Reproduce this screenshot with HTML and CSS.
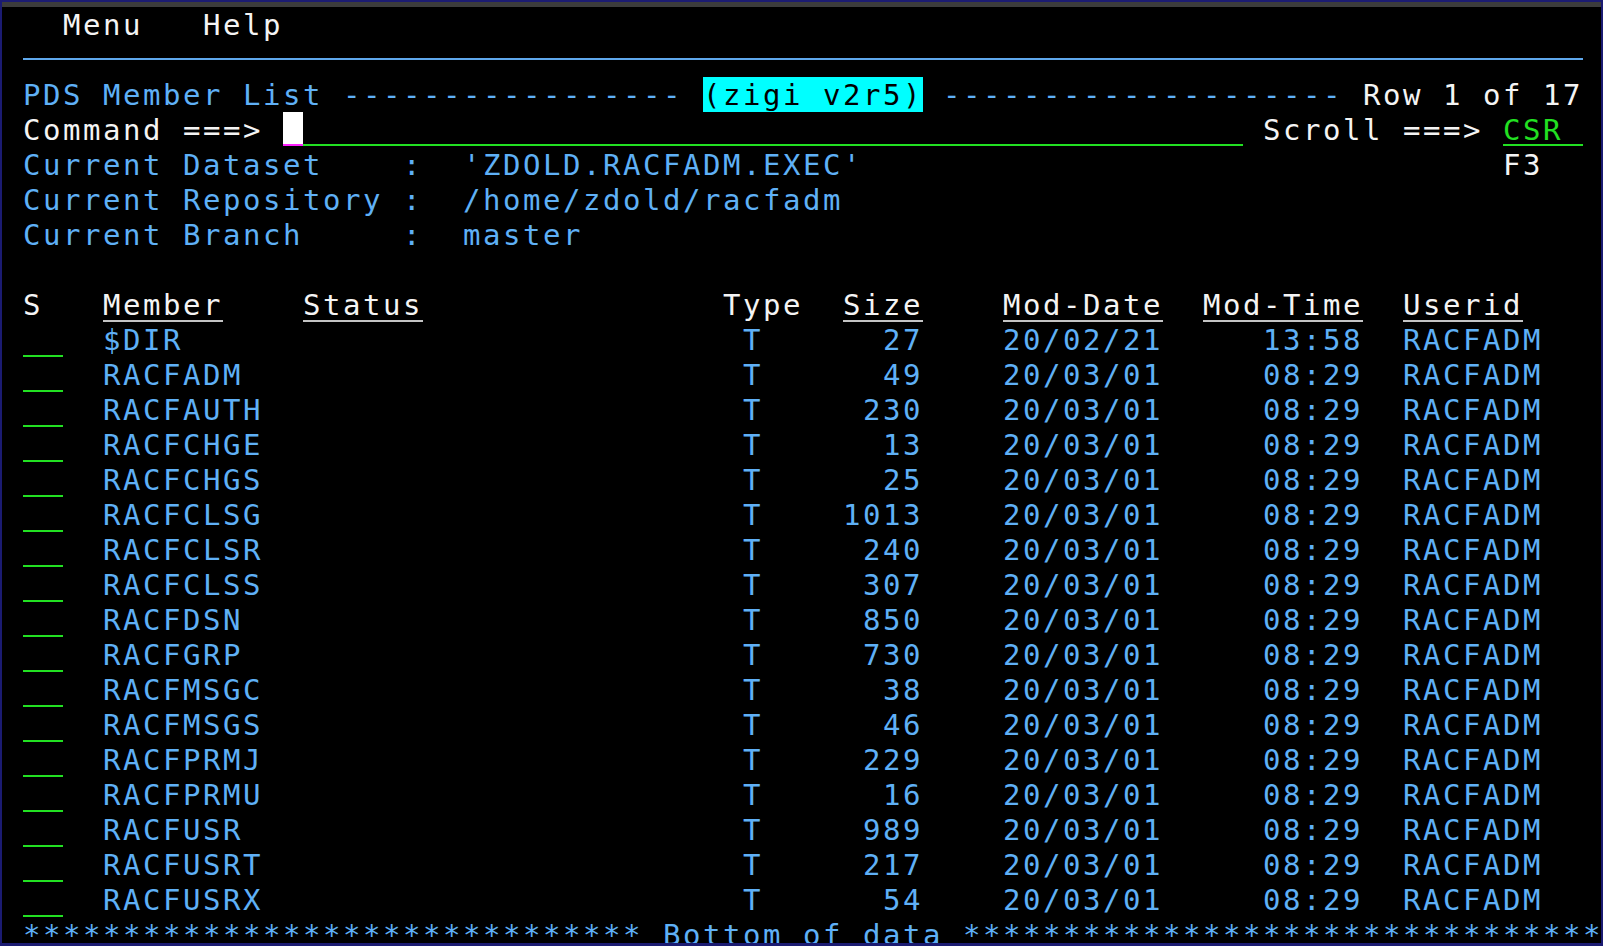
FILE: index.html
```html
<!DOCTYPE html>
<html>
<head>
<meta charset="utf-8">
<title>PDS Member List</title>
<link rel="stylesheet" href="styles.css">
</head>
<body>
<div class="screen">
  <div class="row w">   Menu   Help</div>
  <div class="row"><div class="sep"></div></div>
  <div class="row b"> PDS Member List ----------------- <span class="hl">(zigi v2r5)</span> -------------------- <span class="w">Row 1 of 17</span></div>
  <div class="row w"> Command ===> <span class="cursor"></span><span class="field"></span> Scroll ===> <span class="u cmd g">CSR </span></div>
  <div class="row b"><span class="lbl"> Current Dataset    :  </span><span class="val">'ZDOLD.RACFADM.EXEC'</span><span class="pf w">F3</span></div>
  <div class="row b"><span class="lbl"> Current Repository :  </span><span class="val">/home/zdold/racfadm</span></div>
  <div class="row b"><span class="lbl"> Current Branch     :  </span><span class="val">master</span></div>
  <div class="row"></div>
  <div class="row w hdr">
    <span class="c-s">S</span>
    <span class="c-mem"><span class="u hu">Member</span></span>
    <span class="c-sta"><span class="u hu">Status</span></span>
    <span class="c-typ">Type</span>
    <span class="c-siz"><span class="u hu">Size</span></span>
    <span class="c-10"><span class="u hu">Mod-Date</span></span>
    <span class="c-10"><span class="u hu">Mod-Time</span></span>
    <span class="c-10"><span class="u hu">Userid</span></span>
  </div>
  <div class="row b trow"><span class="sel"></span><span class="mem">$DIR</span><span class="typ">T</span><span class="siz">27</span><span class="dat">20/02/21</span><span class="tim">13:58</span><span class="uid">RACFADM</span></div>
  <div class="row b trow"><span class="sel"></span><span class="mem">RACFADM</span><span class="typ">T</span><span class="siz">49</span><span class="dat">20/03/01</span><span class="tim">08:29</span><span class="uid">RACFADM</span></div>
  <div class="row b trow"><span class="sel"></span><span class="mem">RACFAUTH</span><span class="typ">T</span><span class="siz">230</span><span class="dat">20/03/01</span><span class="tim">08:29</span><span class="uid">RACFADM</span></div>
  <div class="row b trow"><span class="sel"></span><span class="mem">RACFCHGE</span><span class="typ">T</span><span class="siz">13</span><span class="dat">20/03/01</span><span class="tim">08:29</span><span class="uid">RACFADM</span></div>
  <div class="row b trow"><span class="sel"></span><span class="mem">RACFCHGS</span><span class="typ">T</span><span class="siz">25</span><span class="dat">20/03/01</span><span class="tim">08:29</span><span class="uid">RACFADM</span></div>
  <div class="row b trow"><span class="sel"></span><span class="mem">RACFCLSG</span><span class="typ">T</span><span class="siz">1013</span><span class="dat">20/03/01</span><span class="tim">08:29</span><span class="uid">RACFADM</span></div>
  <div class="row b trow"><span class="sel"></span><span class="mem">RACFCLSR</span><span class="typ">T</span><span class="siz">240</span><span class="dat">20/03/01</span><span class="tim">08:29</span><span class="uid">RACFADM</span></div>
  <div class="row b trow"><span class="sel"></span><span class="mem">RACFCLSS</span><span class="typ">T</span><span class="siz">307</span><span class="dat">20/03/01</span><span class="tim">08:29</span><span class="uid">RACFADM</span></div>
  <div class="row b trow"><span class="sel"></span><span class="mem">RACFDSN</span><span class="typ">T</span><span class="siz">850</span><span class="dat">20/03/01</span><span class="tim">08:29</span><span class="uid">RACFADM</span></div>
  <div class="row b trow"><span class="sel"></span><span class="mem">RACFGRP</span><span class="typ">T</span><span class="siz">730</span><span class="dat">20/03/01</span><span class="tim">08:29</span><span class="uid">RACFADM</span></div>
  <div class="row b trow"><span class="sel"></span><span class="mem">RACFMSGC</span><span class="typ">T</span><span class="siz">38</span><span class="dat">20/03/01</span><span class="tim">08:29</span><span class="uid">RACFADM</span></div>
  <div class="row b trow"><span class="sel"></span><span class="mem">RACFMSGS</span><span class="typ">T</span><span class="siz">46</span><span class="dat">20/03/01</span><span class="tim">08:29</span><span class="uid">RACFADM</span></div>
  <div class="row b trow"><span class="sel"></span><span class="mem">RACFPRMJ</span><span class="typ">T</span><span class="siz">229</span><span class="dat">20/03/01</span><span class="tim">08:29</span><span class="uid">RACFADM</span></div>
  <div class="row b trow"><span class="sel"></span><span class="mem">RACFPRMU</span><span class="typ">T</span><span class="siz">16</span><span class="dat">20/03/01</span><span class="tim">08:29</span><span class="uid">RACFADM</span></div>
  <div class="row b trow"><span class="sel"></span><span class="mem">RACFUSR</span><span class="typ">T</span><span class="siz">989</span><span class="dat">20/03/01</span><span class="tim">08:29</span><span class="uid">RACFADM</span></div>
  <div class="row b trow"><span class="sel"></span><span class="mem">RACFUSRT</span><span class="typ">T</span><span class="siz">217</span><span class="dat">20/03/01</span><span class="tim">08:29</span><span class="uid">RACFADM</span></div>
  <div class="row b trow"><span class="sel"></span><span class="mem">RACFUSRX</span><span class="typ">T</span><span class="siz">54</span><span class="dat">20/03/01</span><span class="tim">08:29</span><span class="uid">RACFADM</span></div>
  <div class="row b"> ******************************* Bottom of data ********************************</div>
</div>
</body>
</html>
```
FILE: styles.css
```css
html, body {
  margin: 0;
  padding: 0;
  width: 1603px;
  height: 946px;
  overflow: hidden;
  background: #1b1b72;
}

.screen {
  box-sizing: border-box;
  width: 1599px;
  height: 941px;
  margin: 2px 2px 0 2px;
  border-top: 5px solid #3c3c3c;
  padding-left: 1px;
  background: #000;
  overflow: hidden;
  font-family: "DejaVu Sans Mono", monospace;
  font-size: 29px;
  letter-spacing: 2.5405px;
}

.row {
  display: flex;
  flex-shrink: 0;
  box-sizing: border-box;
  width: 1600px;
  height: 35px;
  padding-top: 2px;
  line-height: 33px;
  white-space: pre;
}

.w { color: #f4f4f4; }
.b { color: #5fb0f6; }
.g { color: #22e022; }

.sep {
  margin-top: 14px;
  margin-left: 20px;
  width: 1560px;
  height: 2px;
  background: #5fa8ec;
}

.hl {
  box-sizing: border-box;
  height: 35px;
  margin-top: -2px;
  padding-top: 2px;
  background: #00ffff;
  color: #000;
}

.cursor {
  margin-top: -2px;
  width: 20px;
  height: 32px;
  background: #ffffff;
  border-bottom: 2px solid #ff20ff;
}

.field {
  margin-top: -2px;
  width: 940px;
  height: 32px;
  border-bottom: 2px solid #22e022;
}

.u {
  display: inline-block;
  box-sizing: border-box;
  height: 33px;
  border-bottom: 2px solid #22e022;
}

.u.cmd { height: 32px; }

.hu { border-bottom-color: #c4c4c4; }

.pf {
  margin-left: auto;
  width: 100px;
}

/* header cells */
.c-s { margin-left: 20px; width: 80px; }
.c-mem { width: 200px; }
.c-sta { width: 420px; }
.c-typ { width: 120px; }
.c-siz { width: 160px; }
.c-10 { width: 200px; }

/* table rows */
.sel {
  box-sizing: border-box;
  margin-left: 20px;
  width: 40px;
  height: 33px;
  border-bottom: 2px solid #22e022;
}
.mem { margin-left: 40px; width: 640px; }
.typ { width: 20px; }
.siz { width: 160px; text-align: right; }
.dat { margin-left: 80px; width: 160px; }
.tim { width: 200px; text-align: right; }
.uid { margin-left: 40px; }
```
